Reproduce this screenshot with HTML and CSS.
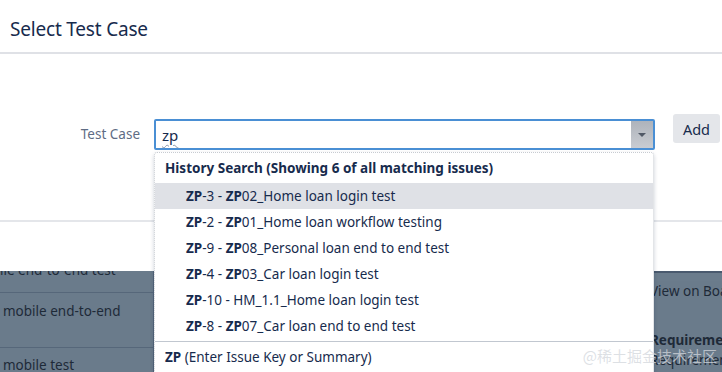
FILE: index.html
```html
<!DOCTYPE html>
<html>
<head>
<meta charset="utf-8">
<link rel="stylesheet" href="styles.css">
</head>
<body>
<div class="screen">
  <div class="modal">
    <div class="modal-header"><h2 class="title">Select Test Case</h2></div>
    <div class="modal-body">
      <div class="field">
        <label class="label">Test Case</label>
        <div class="picker">
          <div class="input"><span class="typed">zp</span><span class="arrow"><span class="tri"></span></span></div>
          <div class="dropdown">
            <div class="dd-head">History Search (Showing 6 of all matching issues)</div>
            <ul class="dd-list">
              <li class="dd-item active"><b>ZP</b>-3 - <b>ZP</b>02_Home loan login test</li>
              <li class="dd-item"><b>ZP</b>-2 - <b>ZP</b>01_Home loan workflow testing</li>
              <li class="dd-item"><b>ZP</b>-9 - <b>ZP</b>08_Personal loan end to end test</li>
              <li class="dd-item"><b>ZP</b>-4 - <b>ZP</b>03_Car loan login test</li>
              <li class="dd-item"><b>ZP</b>-10 - HM_1.1_Home loan login test</li>
              <li class="dd-item"><b>ZP</b>-8 - <b>ZP</b>07_Car loan end to end test</li>
            </ul>
            <div class="dd-foot"><b>ZP</b> (Enter Issue Key or Summary)</div>
          </div>
        </div>
        <button class="btn">Add</button>
      </div>
    </div>
    <div class="modal-footer"></div>
  </div>
  <div class="backdrop">
    <div class="bcol left">
      <div class="brow cut"><span class="cut-text">ile end-to-end test</span></div>
      <div class="brow tall">mobile end-to-end</div>
      <div class="brow last">mobile test</div>
    </div>
    <div class="bcol mid"></div>
    <div class="bcol right">
      <div class="rtop"></div>
      <div class="rlink">View on Board</div>
      <div class="rhead">Requirements</div>
      <div class="rlink">Requirement</div>
    </div>
  </div>
  <div class="watermark">@稀土掘金技术社区</div>
</div>
</body>
</html>
```

FILE: styles.css
```css
* { box-sizing: border-box; }
html, body { margin: 0; padding: 0; }
body {
  width: 722px;
  height: 372px;
  overflow: hidden;
  font-family: "Noto Sans", "Open Sans", sans-serif;
  color: #172b4d;
  background: #fff;
}
.screen { position: relative; width: 722px; height: 372px; overflow: hidden; }

.modal { background: #fff; height: 271px; display: flex; flex-direction: column; }
.modal-header {
  height: 54px;
  border-bottom: 2px solid #dfe1e6;
  padding: 0 10px;
  display: flex;
  align-items: center;
}
.title { margin: 0; font-weight: 400; font-size: 19px; color: #172b4d; letter-spacing: -0.2px; position: relative; top: 3px; }

.modal-body { height: 166px; padding-top: 65px; }
.field { display: flex; align-items: flex-start; }
.label {
  width: 140px;
  text-align: right;
  font-size: 13.5px;
  color: #5e6c84;
  line-height: 30px;
  margin-right: 14px;
}
.picker { position: relative; width: 501px; }
.input {
  height: 31px;
  border: 2px solid #4a8fd4;
  border-radius: 2px;
  display: flex;
  align-items: center;
  justify-content: space-between;
  padding-left: 6px;
}
.typed {
  font-size: 15px;
  color: #172b4d;
  text-decoration: underline wavy #8a96a8 1px;
  text-underline-offset: 3px;
}
.arrow {
  width: 22px;
  height: 27px;
  background: linear-gradient(#aeb3bb, #c9ccd2);
  display: flex;
  align-items: center;
  justify-content: center;
}
.tri { width: 0; height: 0; border-left: 4px solid transparent; border-right: 4px solid transparent; border-top: 4px solid #505866; }

.btn {
  margin-left: 18px;
  margin-top: -5px;
  height: 29px;
  width: 47px;
  border: none;
  border-radius: 3px;
  background: #e4e6ea;
  font-family: inherit;
  font-size: 14.5px;
  color: #172b4d;
  padding: 0;
}

.dropdown {
  position: absolute;
  top: 33px;
  left: 0;
  width: 500px;
  height: 240px;
  background: #fff;
  border: 1px dotted #c7cbd1;
  border-radius: 3px;
  box-shadow: 0 2px 4px rgba(9,30,66,0.2);
  z-index: 5;
  font-size: 13.5px;
  color: #172b4d;
}
.dd-head { font-weight: 700; padding: 0 10px; height: 30px; line-height: 30px; }
.dd-list { list-style: none; margin: 0; padding: 0; }
.dd-item { height: 26px; line-height: 26px; padding-left: 31px; white-space: nowrap; }
.dd-item.active { background: #dfe1e6; }
.dd-foot { border-top: 1px solid #c1c7d0; margin-top: 2px; padding: 0 10px; height: 32px; line-height: 30px; }

.modal-footer { flex: 1; border-top: 2px solid #e4e6ea; }

.backdrop {
  height: 101px;
  background: #6a7b8b;
  display: grid;
  grid-template-columns: 154px 500px 68px;
  overflow: hidden;
  color: #1e2a38;
  font-size: 13.5px;
}
.bcol.left { border-right: 1px solid #56667a; }
.brow { padding-left: 3px; border-bottom: 1px solid #56677a; white-space: nowrap; }
.brow.cut { height: 22px; overflow: hidden; padding-left: 0; }
.cut-text { display: block; line-height: 14px; margin-top: -8px; }
.brow.tall { height: 55px; padding-top: 9px; }
.brow.last { padding-top: 8px; border-bottom: none; }
.rtop { height: 10px; border-top: 2px solid #4a5a6e; background: #6b7c8c; }
.rlink { margin-left: -4px; white-space: nowrap; line-height: 20px; }
.rhead { margin-left: -4px; font-weight: 700; margin-top: 29px; line-height: 20px; white-space: nowrap; }

.watermark {
  position: absolute;
  right: 5px;
  bottom: 6px;
  font-family: "Noto Sans CJK SC", sans-serif;
  font-size: 15px;
  color: rgba(210,214,220,0.75);
  z-index: 9;
}
```
